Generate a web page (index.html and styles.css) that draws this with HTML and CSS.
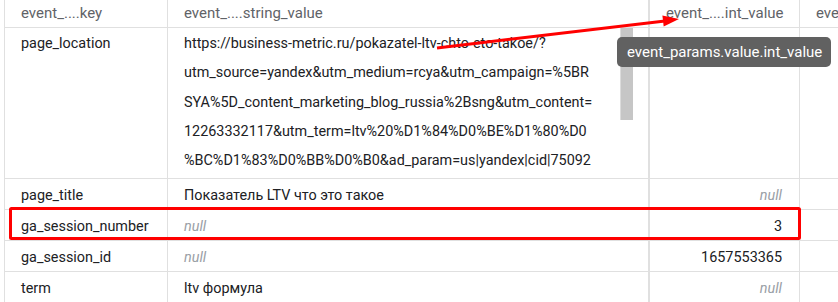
FILE: index.html
```html
<!DOCTYPE html>
<html lang="en">
<head>
    <meta charset="UTF-8">
    <title>event_params</title>
    <link rel="stylesheet" href="styles.css">
</head>
<body>
    <div class="sheet">
        <div class="row head">
            <div class="cell">event_....key</div>
            <div class="cell">event_....string_value</div>
            <div class="cell num">event_....int_value</div>
            <div class="cell">eve</div>
        </div>

        <div class="row tall">
            <div class="cell">page_location</div>
            <div class="cell long">
                <div>https://business-metric.ru/pokazatel-ltv-chto-eto-takoe/?</div>
                <div>utm_source=yandex&amp;utm_medium=rcya&amp;utm_campaign=%5BR</div>
                <div>SYA%5D_content_marketing_blog_russia%2Bsng&amp;utm_content=</div>
                <div>12263332117&amp;utm_term=ltv%20%D1%84%D0%BE%D1%80%D0</div>
                <div>%BC%D1%83%D0%BB%D0%B0&amp;ad_param=us|yandex|cid|75092</div>
                <span class="thumb"></span>
            </div>
            <div class="cell num null">null</div>
            <div class="cell"></div>
        </div>

        <div class="row">
            <div class="cell">page_title</div>
            <div class="cell">Показатель LTV что это такое</div>
            <div class="cell num null">null</div>
            <div class="cell"></div>
        </div>

        <div class="row">
            <div class="cell">ga_session_number</div>
            <div class="cell null">null</div>
            <div class="cell num">3</div>
            <div class="cell"></div>
        </div>

        <div class="row">
            <div class="cell">ga_session_id</div>
            <div class="cell null">null</div>
            <div class="cell num">1657553365</div>
            <div class="cell"></div>
        </div>

        <div class="row">
            <div class="cell">term</div>
            <div class="cell">ltv формула</div>
            <div class="cell num null">null</div>
            <div class="cell"></div>
        </div>
    </div>

    <div class="tooltip">event_params.value.int_value</div>

    <svg class="marks" width="838" height="302" viewBox="0 0 838 302">
        <line x1="437" y1="48" x2="665" y2="21" stroke="#ff0000" stroke-width="3"/>
        <polygon points="679,19 663.7,26.4 662.4,15.4" fill="#ff0000"/>
        <rect x="10.5" y="208.5" width="789" height="30" rx="1" fill="none" stroke="#ff0000" stroke-width="3"/>
    </svg>
</body>
</html>
```

FILE: styles.css
```css
* {
    margin: 0;
    padding: 0;
    box-sizing: border-box;
}

body {
    font-family: Roboto, 'Liberation Sans', sans-serif;
    font-size: 14.4px;
    color: #202124;
    background: #fff;
    width: 838px;
    height: 302px;
    overflow: hidden;
    position: relative;
}

.sheet {
    margin-left: 4px;
    border-left: 1px solid #e0e0e0;
}

.row {
    display: grid;
    grid-template-columns: 163px 482px 150px 40px;
    height: 31px;
    border-bottom: 1px solid #e0e0e0;
}

.cell {
    padding: 2px 17px 0 16px;
    line-height: 29px;
    white-space: nowrap;
    overflow: hidden;
    border-right: 1px solid #e0e0e0;
}

.cell:nth-child(2) {
    border-right: 2px solid #e0e0e0;
}

.head {
    height: 28px;
}

.head .cell {
    padding-top: 0;
    color: #5f6368;
    font-size: 15px;
    line-height: 27px;
}

.tall {
    height: 151px;
}

.tall .cell {
    padding-top: 1px;
    line-height: 29.3px;
}

.long {
    position: relative;
}

.thumb {
    position: absolute;
    top: 0;
    right: 15px;
    width: 13px;
    height: 92px;
    background: #c6c6c6;
    border-left: 1px solid #dcdcdc;
}

.num {
    text-align: right;
}

.null {
    color: #9aa0a6;
    font-style: italic;
}

.tooltip {
    position: absolute;
    left: 617px;
    top: 37px;
    width: 214px;
    height: 30px;
    padding-left: 10px;
    line-height: 30px;
    font-size: 15px;
    color: #fff;
    background: #616161;
    border-radius: 5px;
    white-space: nowrap;
}

.marks {
    position: absolute;
    top: 0;
    left: 0;
    pointer-events: none;
}
```
